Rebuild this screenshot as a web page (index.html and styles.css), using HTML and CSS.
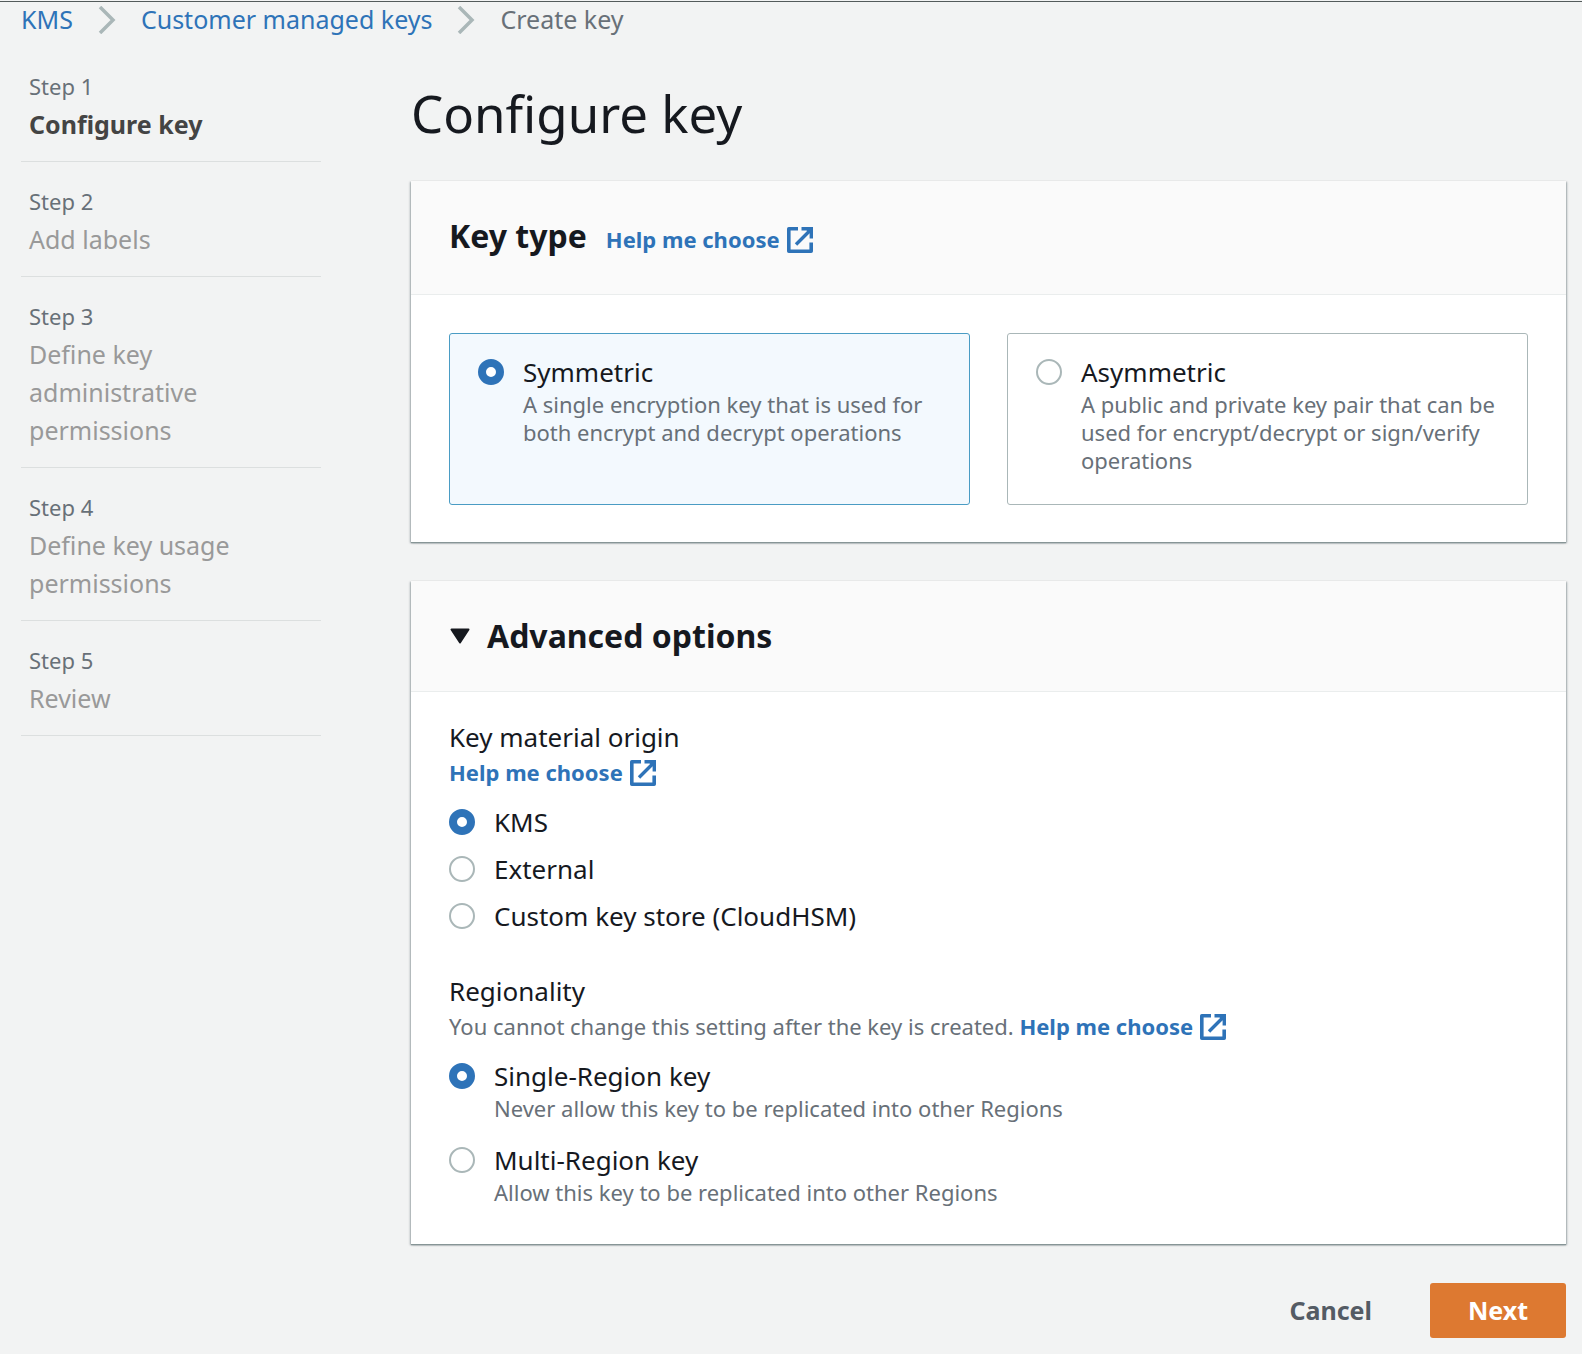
FILE: index.html
```html
<!DOCTYPE html>
<html lang="en">
<head>
<meta charset="utf-8">
<title>Configure key</title>
<meta name="viewport" content="width=device-width, initial-scale=1">
<link rel="stylesheet" href="styles.css">
</head>
<body>
<svg class="sprite" aria-hidden="true">
  <symbol id="external" viewBox="0 0 26 26">
    <path d="M11 1.800H1.800V24.200H24.200V15.500" fill="none" stroke="currentColor" stroke-width="3.600" stroke-linejoin="round"/>
    <path d="M9 17.500L23 3.500" fill="none" stroke="currentColor" stroke-width="3.400"/>
    <path d="M14.500 0H26V11.500H22.600V6.500L19.500 3.400H14.500Z" fill="currentColor"/>
  </symbol>
  <symbol id="chevron" viewBox="0 0 18 28">
    <path d="M2 1L15 14L2 27" fill="none" stroke="currentColor" stroke-width="3.500"/>
  </symbol>
</svg>

<nav class="breadcrumb" aria-label="Breadcrumb">
  <a href="#kms">KMS</a>
  <svg class="chevron"><use href="#chevron"/></svg>
  <a href="#keys">Customer managed keys</a>
  <svg class="chevron"><use href="#chevron"/></svg>
  <span>Create key</span>
</nav>

<div class="layout">
  <ol class="steps">
    <li class="step step-current"><span class="step-number">Step 1</span><span class="step-name">Configure key</span></li>
    <li class="step"><span class="step-number">Step 2</span><span class="step-name">Add labels</span></li>
    <li class="step"><span class="step-number">Step 3</span><span class="step-name">Define key administrative permissions</span></li>
    <li class="step"><span class="step-number">Step 4</span><span class="step-name">Define key usage permissions</span></li>
    <li class="step"><span class="step-number">Step 5</span><span class="step-name">Review</span></li>
  </ol>

  <main class="content">
    <h1>Configure key</h1>
    <form>
      <section class="card">
        <header class="card-header">
          <h2>Key type</h2>
          <a class="help" href="#help-type">Help me choose<svg class="external"><use href="#external"/></svg></a>
        </header>
        <div class="tiles">
          <label class="tile tile-selected">
            <input type="radio" name="type" checked>
            <span class="option-text"><span class="option-title">Symmetric</span><span class="option-note">A single encryption key that is used for both encrypt and decrypt operations</span></span>
          </label>
          <label class="tile">
            <input type="radio" name="type">
            <span class="option-text"><span class="option-title">Asymmetric</span><span class="option-note">A public and private key pair that can be used for encrypt/decrypt or sign/verify operations</span></span>
          </label>
        </div>
      </section>

      <section class="card">
        <header class="card-header">
          <button class="toggle" type="button" aria-expanded="true">
            <svg class="caret" viewBox="0 0 22 16"><path d="M2.500 1.500H19.500L11 14.500Z" fill="currentColor" stroke="currentColor" stroke-width="2" stroke-linejoin="round"/></svg>
            <span>Advanced options</span>
          </button>
        </header>
        <div class="card-body">
          <fieldset>
            <legend>Key material origin</legend>
            <p class="hint"><a class="help" href="#help-origin">Help me choose<svg class="external"><use href="#external"/></svg></a></p>
            <div class="options">
              <label class="option"><input type="radio" name="origin" checked><span class="option-title">KMS</span></label>
              <label class="option"><input type="radio" name="origin"><span class="option-title">External</span></label>
              <label class="option"><input type="radio" name="origin"><span class="option-title">Custom key store (CloudHSM)</span></label>
            </div>
          </fieldset>
          <fieldset>
            <legend>Regionality</legend>
            <p class="hint">You cannot change this setting after the key is created. <a class="help" href="#help-region">Help me choose<svg class="external"><use href="#external"/></svg></a></p>
            <div class="options options-noted">
              <label class="option"><input type="radio" name="region" checked><span class="option-text"><span class="option-title">Single-Region key</span><span class="option-note">Never allow this key to be replicated into other Regions</span></span></label>
              <label class="option"><input type="radio" name="region"><span class="option-text"><span class="option-title">Multi-Region key</span><span class="option-note">Allow this key to be replicated into other Regions</span></span></label>
            </div>
          </fieldset>
        </div>
      </section>

      <footer class="actions">
        <button class="button" type="button">Cancel</button>
        <button class="button button-primary" type="submit">Next</button>
      </footer>
    </form>
  </main>
</div>
</body>
</html>
```
FILE: styles.css
```css
* {
  box-sizing: border-box;
}

body {
  margin: 0;
  border-top: 1px solid #f2f3f3;
  background: #f2f3f3;
  color: #16191f;
  font-family: "Noto Sans", "Open Sans", sans-serif;
  font-size: 26px;
  line-height: 36px;
}

h1, h2, p, ol, fieldset, legend {
  margin: 0;
  padding: 0;
}

a {
  color: #2e73b8;
  text-decoration: none;
}

.sprite {
  position: absolute;
  width: 0;
  height: 0;
}

/* Breadcrumb */
.breadcrumb {
  display: flex;
  align-items: center;
  gap: 25px;
  padding: 0 21px;
  border-top: 1px solid #545b5b;
  color: #687078;
  font-size: 25px;
  line-height: 35px;
}

.chevron {
  width: 18px;
  height: 28px;
  color: #aab7b8;
}

/* Page columns */
.layout {
  display: grid;
  grid-template-columns: 300px minmax(0, 1fr);
  gap: 90px;
  padding: 0 16px 16px 21px;
}

.steps {
  padding-top: 10px;
  list-style: none;
}

.step {
  display: flex;
  flex-direction: column;
  padding: 20px 8px 18px;
  border-bottom: 1px solid #dcdfdf;
  line-height: 38px;
}

.step-number {
  color: #687078;
  font-size: 22px;
}

.step-name {
  color: #999;
  font-size: 25px;
}

.step-current .step-name {
  color: #444;
  font-weight: 700;
}

h1 {
  padding: 44px 0 36px;
  font-size: 51px;
  font-weight: 400;
  line-height: 64px;
}

/* Cards */
.card {
  margin-bottom: 39px;
  background: #fff;
  box-shadow: 0 1px 1px #879596, 1px 1px 2px rgba(0, 28, 36, 0.3), -1px 1px 2px rgba(0, 28, 36, 0.3);
}

.card-header {
  display: flex;
  align-items: baseline;
  gap: 19px;
  padding: 33px 38px;
  border-bottom: 1px solid #eaeded;
  background: #fafafa;
  line-height: 44px;
}

h2, .toggle {
  font-size: 32px;
  font-weight: 700;
}

.toggle {
  display: flex;
  align-items: center;
  gap: 16px;
  padding: 0;
  border: 0;
  background: none;
  color: inherit;
  font-family: inherit;
  line-height: 44px;
}

.caret {
  width: 22px;
  height: 16px;
}

.help {
  font-size: 22px;
  font-weight: 700;
  white-space: nowrap;
}

.external {
  width: 26px;
  height: 26px;
  margin-left: 7px;
  vertical-align: -5px;
}

/* Radio options */
input[type="radio"] {
  flex: none;
  width: 26px;
  height: 26px;
  margin: 5px 0;
  appearance: none;
  border: 2px solid #aab7b8;
  border-radius: 50%;
  background: #fff;
}

input[type="radio"]:checked {
  border: 8px solid #2e73b8;
}

.tiles {
  display: grid;
  grid-template-columns: 1fr 1fr;
  gap: 37px;
  padding: 38px 38px 37px;
}

.tile, .option {
  display: flex;
  align-items: flex-start;
  gap: 19px;
}

.tile {
  padding: 20px 20px 30px 28px;
  border: 1px solid #aab7b8;
  border-radius: 3px;
}

.tile-selected {
  border-color: #4a9cc4;
  background: #f3f9fe;
}

.option-text {
  display: flex;
  flex-direction: column;
}

.option-note {
  color: #687078;
  font-size: 22px;
  line-height: 28px;
}

.card-body {
  display: flex;
  flex-direction: column;
  gap: 38px;
  padding: 26px 38px 38px;
}

fieldset {
  min-width: 0;
  border: 0;
}

legend {
  line-height: 38px;
}

.hint {
  height: 32px;
  color: #687078;
  font-size: 22px;
  line-height: 32px;
}

.options {
  display: flex;
  flex-direction: column;
  gap: 11px;
  padding-top: 16px;
}

.options-noted {
  gap: 20px;
}

/* Form actions */
.actions {
  display: flex;
  justify-content: flex-end;
  gap: 20px;
}

.button {
  padding: 9px 38px 10px;
  border: 0;
  border-radius: 3px;
  background: none;
  color: #545b64;
  font-family: inherit;
  font-size: 25px;
  font-weight: 700;
  line-height: 36px;
}

.button-primary {
  background: #dd7931;
  color: #fff;
}
```
